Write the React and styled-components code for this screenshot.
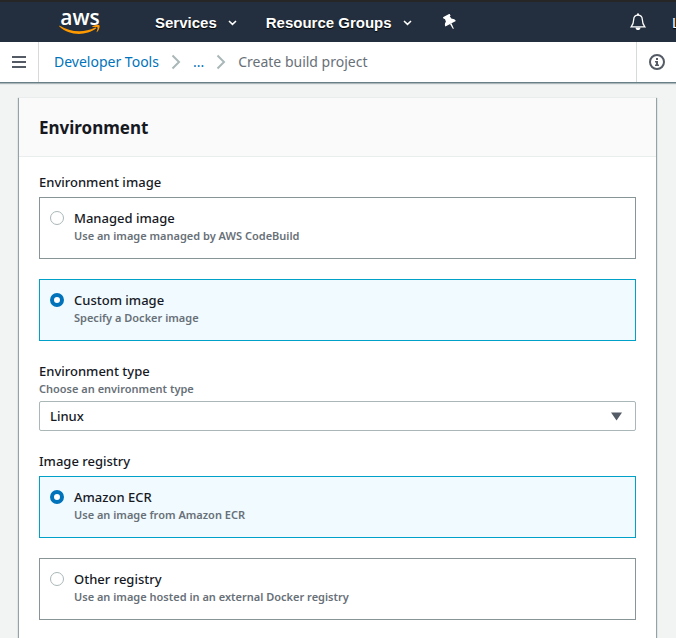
// App.jsx
import { useState } from "react";
import styled, { createGlobalStyle } from "styled-components";

const imageOptions = [
  { value: "managed", title: "Managed image", hint: "Use an image managed by AWS CodeBuild" },
  { value: "custom", title: "Custom image", hint: "Specify a Docker image" },
];

const registryOptions = [
  { value: "ecr", title: "Amazon ECR", hint: "Use an image from Amazon ECR" },
  { value: "other", title: "Other registry", hint: "Use an image hosted in an external Docker registry" },
];

const Caret = () => (
  <svg width="9" height="6" viewBox="0 0 9 6" aria-hidden="true">
    <path d="M1 1l3.500 3.400L8 1" fill="none" stroke="#fff" strokeWidth="1.500" />
  </svg>
);

const Chevron = () => (
  <svg width="10" height="16" viewBox="0 0 10 16" aria-hidden="true">
    <path d="M1.500 1.500L8 8l-6.500 6.500" fill="none" stroke="#aab7b8" strokeWidth="2" />
  </svg>
);

const TileGroup = ({ label, name, options, value, onChange }) => (
  <Fieldset>
    <Legend>{label}</Legend>
    <Tiles>
      {options.map((option) => (
        <Tile key={option.value} $selected={value === option.value}>
          <Radio
            type="radio"
            name={name}
            value={option.value}
            checked={value === option.value}
            onChange={() => onChange(option.value)}
          />
          <TileText>
            <span>{option.title}</span>
            <Hint>{option.hint}</Hint>
          </TileText>
        </Tile>
      ))}
    </Tiles>
  </Fieldset>
);

const App = () => {
  const [image, setImage] = useState("custom");
  const [type, setType] = useState("linux");
  const [registry, setRegistry] = useState("ecr");

  return (
    <>
      <GlobalStyle />
      <TopBar>
        <Logo href="#home">
          aws
          <svg width="42" height="10" viewBox="0 0 42 10" aria-hidden="true">
            <path
              d="M.800.700C.200.500-.200 1 .400 1.600 5.500 6.300 12.500 9 20 9c6 0 12.500-2 17-5.400.700-.600.100-1.500-.800-1.100C31 5 25.500 6.300 20.500 6.300 13 6.300 6.300 4.200.800.700z"
              fill="#f90"
            />
            <path
              d="M33.500 1.300c2-1.300 6.500-1.700 7-.800.500 1-.400 4.800-2.400 6.600-.400.300-.700.100-.500-.400.500-1.200 1.400-3.700.900-4.300-.600-.700-3.400-.400-4.800-.300-.500 0-.600-.500-.200-.800z"
              fill="#f90"
            />
          </svg>
        </Logo>
        <Menus>
          <MenuButton type="button">Services <Caret /></MenuButton>
          <MenuButton type="button">Resource Groups <Caret /></MenuButton>
          <IconButton type="button" aria-label="Pin shortcuts">
            <svg width="16" height="16" viewBox="0 0 16 16" aria-hidden="true">
              <g transform="rotate(-28 9 8)" fill="#fff">
                <path d="M5 .500h7.500v2.200h-1l.500 3.200c1.700.700 2.600 1.900 2.700 3.900H2.800c.100-2 1-3.200 2.700-3.900L6 2.700H5z" />
                <path d="M8 9.800h1.700l-.400 5.700h-.900z" />
              </g>
            </svg>
          </IconButton>
        </Menus>
        <IconButton type="button" aria-label="Notifications">
          <svg width="16" height="18" viewBox="0 0 16 18" aria-hidden="true">
            <path
              d="M8 2.200c-2.700 0-4.200 1.900-4.300 4.300-.100 3.300-.600 5-2.500 7.300h13.600c-1.900-2.300-2.400-4-2.500-7.300C12.200 4.100 10.700 2.200 8 2.200z"
              fill="none"
              stroke="#fff"
              strokeWidth="1.300"
            />
            <path d="M7 .600h2v1.600H7zM5.500 14.400h5c-.200 1.700-1.200 2.700-2.500 2.700s-2.300-1-2.500-2.700z" fill="#fff" />
          </svg>
        </IconButton>
        <Account type="button">L</Account>
      </TopBar>

      <SubBar>
        <ToolButton type="button" aria-label="Open navigation">
          <svg width="14" height="12" viewBox="0 0 14 12" aria-hidden="true">
            <path d="M0 1h14M0 6h14M0 11h14" stroke="#545b64" strokeWidth="2" />
          </svg>
        </ToolButton>
        <Breadcrumbs aria-label="Breadcrumbs">
          <Crumb href="#developer-tools">Developer Tools</Crumb>
          <Chevron />
          <Crumb href="#more">...</Crumb>
          <Chevron />
          <Current>Create build project</Current>
        </Breadcrumbs>
        <ToolButton type="button" aria-label="Info" $right>
          <svg width="16" height="16" viewBox="0 0 16 16" aria-hidden="true">
            <circle cx="8" cy="8" r="7" fill="none" stroke="#545b64" strokeWidth="2" />
            <path d="M7 4h2v2H7zM6 7h3v3.500h1V12H6v-1.500h1v-2H6z" fill="#545b64" />
          </svg>
        </ToolButton>
      </SubBar>

      <Main>
        <Card>
          <CardHeader>
            <h2>Environment</h2>
          </CardHeader>
          <CardBody>
            <TileGroup
              label="Environment image"
              name="image"
              options={imageOptions}
              value={image}
              onChange={setImage}
            />
            <Field>
              <label htmlFor="env-type">Environment type</label>
              <Hint id="env-type-hint">Choose an environment type</Hint>
              <SelectBox>
                <Select
                  id="env-type"
                  aria-describedby="env-type-hint"
                  value={type}
                  onChange={(e) => setType(e.target.value)}
                >
                  <option value="linux">Linux</option>
                </Select>
                <svg width="11" height="9" viewBox="0 0 11 9" aria-hidden="true">
                  <path d="M0 .500h11L5.500 8.500z" fill="#545b64" />
                </svg>
              </SelectBox>
            </Field>
            <TileGroup
              label="Image registry"
              name="registry"
              options={registryOptions}
              value={registry}
              onChange={setRegistry}
            />
          </CardBody>
        </Card>
      </Main>
    </>
  );
};

export default App;

// Styles
const GlobalStyle = createGlobalStyle`
  * {
    box-sizing: border-box;
  }

  body {
    margin: 0;
    overflow-x: hidden;
    background: #f2f3f3;
    color: #16191f;
    font-family: "Noto Sans", "Open Sans", sans-serif;
    font-size: 13px;
    font-weight: 500;
    line-height: 20px;
  }

  button,
  select {
    font: inherit;
    color: inherit;
  }
`;

const TopBar = styled.header`
  display: flex;
  align-items: center;
  height: 42px;
  padding-left: 59px;
  overflow: hidden;
  background: #232f3e;
  border-top: 2px solid #262626;
  color: #fff;
`;

const Logo = styled.a`
  display: flex;
  flex-direction: column;
  align-items: center;
  width: 42px;
  color: #fff;
  font-family: "Open Sans", sans-serif;
  font-size: 21px;
  font-weight: 600;
  line-height: 16px;
  text-decoration: none;
`;

const Menus = styled.nav`
  display: flex;
  flex: 1;
  align-items: center;
  gap: 29px;
  padding-left: 54px;
`;

const MenuButton = styled.button`
  display: flex;
  align-items: center;
  gap: 11px;
  padding: 2px 0 0;
  background: none;
  border: none;
  color: #fff;
  font-family: "Liberation Sans", Arial, sans-serif;
  font-size: 15px;
  font-weight: 700;
  text-shadow: 0 1px 1px #000;
  white-space: nowrap;
  cursor: pointer;
`;

const IconButton = styled.button`
  display: flex;
  padding: 0;
  background: none;
  border: none;
  cursor: pointer;
`;

const Account = styled(MenuButton)`
  width: 4px;
  margin-left: 26px;
  overflow: hidden;
  font-weight: 400;
`;

const SubBar = styled.div`
  display: flex;
  height: 41px;
  background: #fff;
  border-bottom: 1px solid #687f87;
  box-shadow: 0 1px 1px #aab7b8;
`;

const ToolButton = styled.button`
  display: flex;
  align-items: center;
  justify-content: center;
  width: ${({ $right }) => ($right ? "40px" : "39px")};
  padding: 0;
  background: none;
  border: 0 solid #d5dbdb;
  border-width: ${({ $right }) => ($right ? "0 0 0 1px" : "0 1px 0 0")};
  cursor: pointer;
`;

const Breadcrumbs = styled.nav`
  display: flex;
  flex: 1;
  align-items: center;
  gap: 12px;
  padding-left: 15px;
  font-size: 14px;
  font-weight: 400;
`;

const Crumb = styled.a`
  color: #0073bb;
  text-decoration: none;
`;

const Current = styled.span`
  color: #687078;
`;

const Main = styled.main`
  padding: 14px 20px 0 19px;
`;

const Card = styled.section`
  min-height: calc(100vh - 97px);
  background: #fff;
  border-top: 1px solid #eaeded;
  box-shadow: 1px 1px 1px 0 #95a3a5, -1px 1px 1px 0 #95a3a5;
`;

const CardHeader = styled.div`
  padding: 19px 20px 18px;
  background: #fafafa;
  border-bottom: 1px solid #eaeded;

  h2 {
    margin: 0;
    font-size: 17px;
    font-weight: 700;
    line-height: 21px;
  }
`;

const CardBody = styled.div`
  display: grid;
  gap: 20px;
  padding: 15px 20px 20px;
`;

const Fieldset = styled.fieldset`
  min-width: 0;
  margin: 0;
  padding: 0;
  border: none;
`;

const Legend = styled.legend`
  padding: 0 0 5px;
`;

const Tiles = styled.div`
  display: grid;
  gap: 20px;
`;

const Tile = styled.label`
  display: flex;
  gap: 10px;
  padding: 10px 10px 15px;
  background: ${({ $selected }) => ($selected ? "#f1faff" : "#fff")};
  border: 1px solid ${({ $selected }) => ($selected ? "#00a1c9" : "#879596")};
  cursor: pointer;
`;

const Radio = styled.input`
  appearance: none;
  flex: none;
  width: 14px;
  height: 14px;
  margin: 3px 0;
  background: #fff;
  border: 1px solid #aab7b8;
  border-radius: 50%;

  &:checked {
    border: 4px solid #0073bb;
  }
`;

const TileText = styled.span`
  display: grid;
`;

const Hint = styled.span`
  color: #687078;
  font-size: 11px;
  font-weight: 600;
  line-height: 15px;
`;

const Field = styled.div`
  display: flex;
  flex-direction: column;
`;

const SelectBox = styled.div`
  display: grid;
  align-items: center;
  margin-top: 5px;

  > * {
    grid-area: 1 / 1;
  }

  svg {
    justify-self: end;
    margin-right: 14px;
    pointer-events: none;
  }
`;

const Select = styled.select`
  appearance: none;
  width: 100%;
  height: 30px;
  padding: 0 30px 0 10px;
  background: #fff;
  border: 1px solid #aab7b8;
  border-radius: 2px;
`;
